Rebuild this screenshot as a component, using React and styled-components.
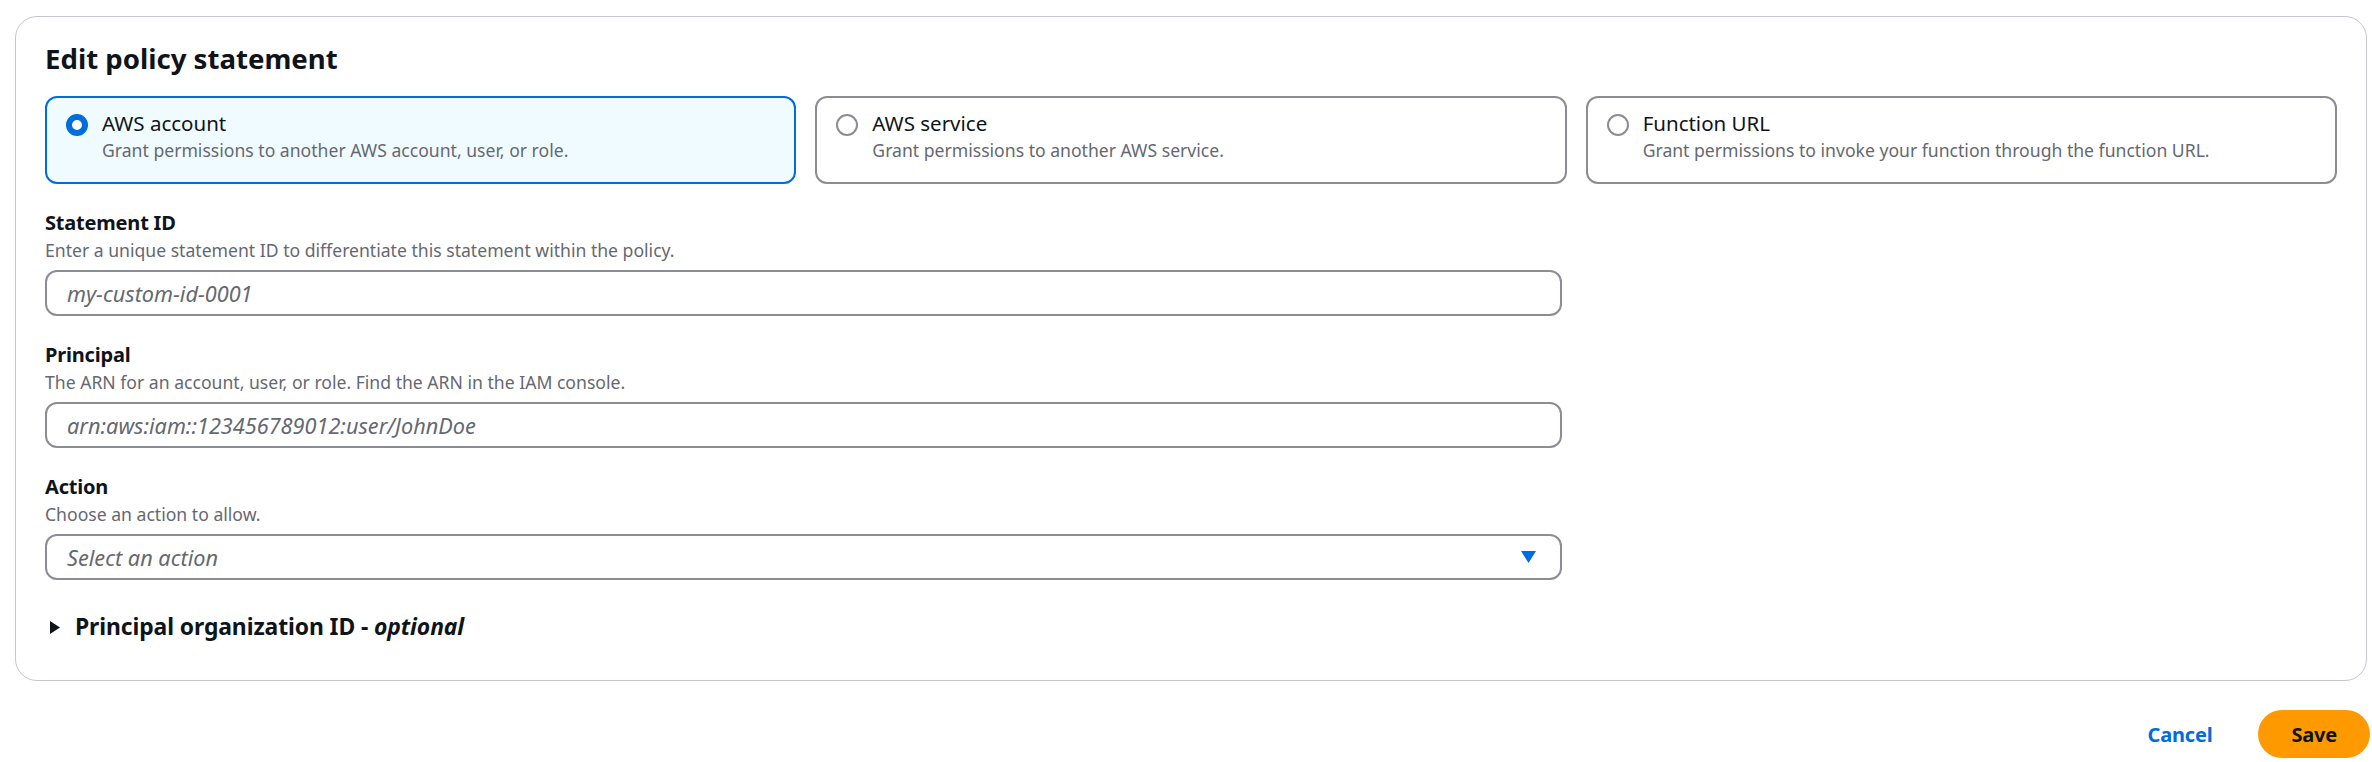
import React from 'react';
import styled, { createGlobalStyle } from 'styled-components';

const GlobalStyle = createGlobalStyle`
  html, body {
    margin: 0;
    padding: 0;
    background: #ffffff;
  }

  body {
    font-family: "Noto Sans", "Open Sans", Arial, sans-serif;
    color: #0f141a;
  }
`;

const Page = styled.div`
  padding: 16px 2px 0 15px;
`;

const Container = styled.section`
  border: 1px solid #c6c6cd;
  border-radius: 22px;
  padding: 23px 29px 38px;
  margin-right: 3px;
`;

const Title = styled.h2`
  margin: 0 0 20px;
  font-size: 27.6px;
  line-height: 36px;
  font-weight: 700;
  color: #0f141a;
`;

const Form = styled.div`
  display: flex;
  flex-direction: column;
  gap: 24px;
`;

const Tiles = styled.div`
  display: grid;
  grid-template-columns: repeat(3, 1fr);
  gap: 19px;
`;

const Tile = styled.label`
  display: flex;
  align-items: flex-start;
  gap: 14px;
  height: 88px;
  box-sizing: border-box;
  padding: 10px 19px 20px;
  border: 2px solid ${(p) => (p.$checked ? '#006ce0' : '#8c8c94')};
  border-radius: 12px;
  background: ${(p) => (p.$checked ? '#f0fbff' : '#ffffff')};
  cursor: pointer;
`;

const Radio = styled.span`
  flex: none;
  width: 22px;
  height: 22px;
  margin-top: 6px;
  box-sizing: border-box;
  border-radius: 50%;
  background: #ffffff;
  border: ${(p) => (p.$checked ? '6px solid #006ce0' : '2px solid #8c8c94')};
`;

const TileText = styled.div`
  display: flex;
  flex-direction: column;
`;

const TileLabel = styled.span`
  font-size: 20.5px;
  line-height: 30px;
  color: #0f141a;
`;

const Description = styled.span`
  font-size: 17.6px;
  line-height: 24px;
  color: #656871;
`;

const Field = styled.div`
  display: flex;
  flex-direction: column;
`;

const FieldLabel = styled.span`
  font-size: 20px;
  line-height: 30px;
  font-weight: 700;
  letter-spacing: -0.2px;
`;

const Control = styled.div`
  margin-top: 8px;
  width: 1517px;
  height: 46px;
  box-sizing: border-box;
  display: flex;
  align-items: center;
  justify-content: space-between;
  padding: 0 24px 0 20px;
  border: 2px solid #8c8c94;
  border-radius: 12px;
  background: #ffffff;
`;

const Placeholder = styled.span`
  font-size: 21.7px;
  font-style: italic;
  color: #656871;
`;

const Caret = styled.svg`
  width: 15px;
  height: 12px;
  fill: #006ce0;
`;

const Expander = styled.div`
  margin-top: 8px;
  display: flex;
  align-items: center;
  gap: 15px;
  padding-left: 5px;
  font-size: 22.9px;
  line-height: 30px;
  font-weight: 700;
  letter-spacing: -0.1px;

  em {
    font-style: italic;
  }
`;

const Arrow = styled.svg`
  width: 10px;
  height: 13px;
  fill: #0f141a;
`;

const Actions = styled.div`
  display: flex;
  justify-content: flex-end;
  align-items: center;
  gap: 46px;
  margin-top: 29px;
`;

const LinkButton = styled.button`
  border: none;
  background: none;
  padding: 0;
  font-family: inherit;
  font-size: 20px;
  font-weight: 700;
  letter-spacing: -0.2px;
  color: #006ce0;
  cursor: pointer;
`;

const PrimaryButton = styled.button`
  border: none;
  height: 48px;
  padding: 0 33px;
  border-radius: 24px;
  background: #ff9900;
  font-family: inherit;
  font-size: 20px;
  font-weight: 700;
  letter-spacing: -0.2px;
  color: #0f141a;
  cursor: pointer;
`;

const tiles = [
  { title: 'AWS account', text: 'Grant permissions to another AWS account, user, or role.', checked: true },
  { title: 'AWS service', text: 'Grant permissions to another AWS service.' },
  { title: 'Function URL', text: 'Grant permissions to invoke your function through the function URL.' },
];

const fields = [
  {
    label: 'Statement ID',
    text: 'Enter a unique statement ID to differentiate this statement within the policy.',
    placeholder: 'my-custom-id-0001',
  },
  {
    label: 'Principal',
    text: 'The ARN for an account, user, or role. Find the ARN in the IAM console.',
    placeholder: 'arn:aws:iam::123456789012:user/JohnDoe',
  },
  {
    label: 'Action',
    text: 'Choose an action to allow.',
    placeholder: 'Select an action',
    select: true,
  },
];

const App = () => {
  return (
    <Page>
      <GlobalStyle />
      <Container>
        <Title>Edit policy statement</Title>
        <Form>
          <Tiles>
            {tiles.map((t) => (
              <Tile key={t.title} $checked={t.checked}>
                <Radio $checked={t.checked} />
                <TileText>
                  <TileLabel>{t.title}</TileLabel>
                  <Description>{t.text}</Description>
                </TileText>
              </Tile>
            ))}
          </Tiles>
          {fields.map((f) => (
            <Field key={f.label}>
              <FieldLabel>{f.label}</FieldLabel>
              <Description>{f.text}</Description>
              <Control>
                <Placeholder>{f.placeholder}</Placeholder>
                {f.select && (
                  <Caret viewBox="0 0 15 12">
                    <polygon points="0,0 15,0 7.5,12" />
                  </Caret>
                )}
              </Control>
            </Field>
          ))}
          <Expander>
            <Arrow viewBox="0 0 10 13">
              <polygon points="0,0 10,6.5 0,13" />
            </Arrow>
            <span>
              Principal organization ID - <em>optional</em>
            </span>
          </Expander>
        </Form>
      </Container>
      <Actions>
        <LinkButton>Cancel</LinkButton>
        <PrimaryButton>Save</PrimaryButton>
      </Actions>
    </Page>
  );
};

export default App;
